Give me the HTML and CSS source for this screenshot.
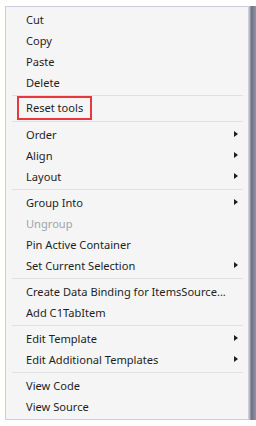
FILE: index.html
```html
<!DOCTYPE html>
<html lang="en">
<head>
    <meta charset="UTF-8">
    <meta name="viewport" content="width=device-width, initial-scale=1.0">
    <title>Context Menu</title>
    <link rel="stylesheet" href="styles.css">
</head>
<body>
    <div class="menu">
        <div class="item">Cut</div>
        <div class="item">Copy</div>
        <div class="item">Paste</div>
        <div class="item">Delete</div>
        <div class="sep"></div>
        <div class="item"><span class="mark">Reset tools</span></div>
        <div class="sep"></div>
        <div class="item sub">Order</div>
        <div class="item sub">Align</div>
        <div class="item sub">Layout</div>
        <div class="sep"></div>
        <div class="item sub">Group Into</div>
        <div class="item disabled">Ungroup</div>
        <div class="item">Pin Active Container</div>
        <div class="item sub">Set Current Selection</div>
        <div class="sep"></div>
        <div class="item">Create Data Binding for ItemsSource...</div>
        <div class="item">Add C1TabItem</div>
        <div class="sep"></div>
        <div class="item sub">Edit Template</div>
        <div class="item sub">Edit Additional Templates</div>
        <div class="sep"></div>
        <div class="item">View Code</div>
        <div class="item">View Source</div>
    </div>
    <div class="edge"></div>
</body>
</html>
```

FILE: styles.css
```css
* {
    margin: 0;
    padding: 0;
    box-sizing: border-box;
}
body {
    font-family: 'Noto Sans', sans-serif;
    font-size: 11.1px;
    color: #1e1e1e;
    background-color: #ffffff;
    display: flex;
    align-items: flex-start;
    padding: 6px 0 0 5px;
    height: 426px;
}
.menu {
    width: 244px;
    height: 414px;
    background-color: #f5f5f5;
    border: 1px solid #cccedb;
    padding: 2px 1px;
    display: flex;
    flex-direction: column;
}
.item {
    position: relative;
    height: 21px;
    line-height: 21px;
    padding-left: 19px;
    white-space: nowrap;
}
.item.disabled {
    color: #a2a4a5;
}
.item.sub::after {
    content: "";
    position: absolute;
    right: 9px;
    top: 7px;
    border-left: 4px solid #1e1e1e;
    border-top: 3.5px solid transparent;
    border-bottom: 3.5px solid transparent;
}
.mark {
    display: inline-block;
    margin-left: -9px;
    padding: 0 7px;
    height: 24px;
    line-height: 20px;
    border: 2px solid #e8383d;
    margin-top: -2px;
    vertical-align: top;
}
.sep {
    height: 1px;
    margin: 2px 4px 2px 5px;
    background-color: #e0e0e0;
}
.edge {
    width: 7px;
    height: 414px;
    background: linear-gradient(to right, #b8b8c4 0, #b8b8c4 1px, #6c6f80 2px, #8f95a8 7px);
}
```
